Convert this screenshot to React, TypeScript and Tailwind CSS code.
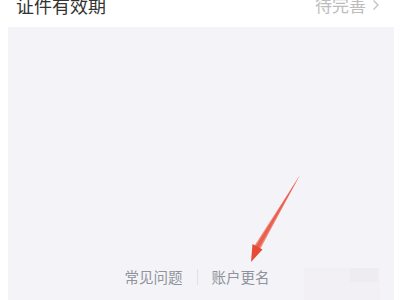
import React from 'react'

const font = '"Noto Sans CJK SC", "Liberation Sans", sans-serif'

function Arrow() {
  return (
    <svg
      className="pointer-events-none absolute left-0 top-0"
      width="400"
      height="300"
      viewBox="0 0 400 300"
    >
      <path d="M300 175 L258.5 249 L255 247.5 Z" fill="#e8523f" opacity="0.85" />
      <path d="M300 175 L260 249.5 L254 246.5 Z" fill="#ea5a46" opacity="0.7" />
      <path d="M251 262 L252.5 244 L262.5 249.5 Z" fill="#e64a36" />
    </svg>
  )
}

export default function App() {
  return (
    <div
      className="relative h-[300px] w-[400px] overflow-hidden bg-white"
      style={{ fontFamily: font }}
    >
      <div className="flex h-[27px] items-start justify-between pl-[16px] pr-[20px]">
        <span className="-mt-[5px] text-[18px] leading-[20px] text-[#333]">
          证件有效期
        </span>
        <span className="-mt-[5px] flex items-center gap-[6px] text-[17px] leading-[20px] text-[#bdbdbd]">
          待完善
          <svg width="8" height="12" viewBox="0 0 8 12">
            <path
              d="M1.5 1.5 L6 6 L1.5 10.5"
              fill="none"
              stroke="#c4c4c4"
              strokeWidth="1.4"
            />
          </svg>
        </span>
      </div>
      <div className="relative ml-[8px] flex h-[273px] w-[386px] flex-col justify-end bg-[#f4f3f8] pb-[14px]">
        <div className="flex items-center justify-center pr-[8px] text-[14.5px] leading-[18px] text-[#8f939c]">
          <span>常见问题</span>
          <span className="mx-[14px] h-[16px] w-px bg-[#e2e1e6]" />
          <span>账户更名</span>
        </div>
        <div className="absolute left-[296px] top-[241px] h-[32px] w-[76px] bg-[#f0eff3] opacity-60" />
        <div className="absolute left-[342px] top-[241px] h-[14px] w-[28px] bg-[#ebeaee] opacity-60" />
      </div>
      <Arrow />
    </div>
  )
}
